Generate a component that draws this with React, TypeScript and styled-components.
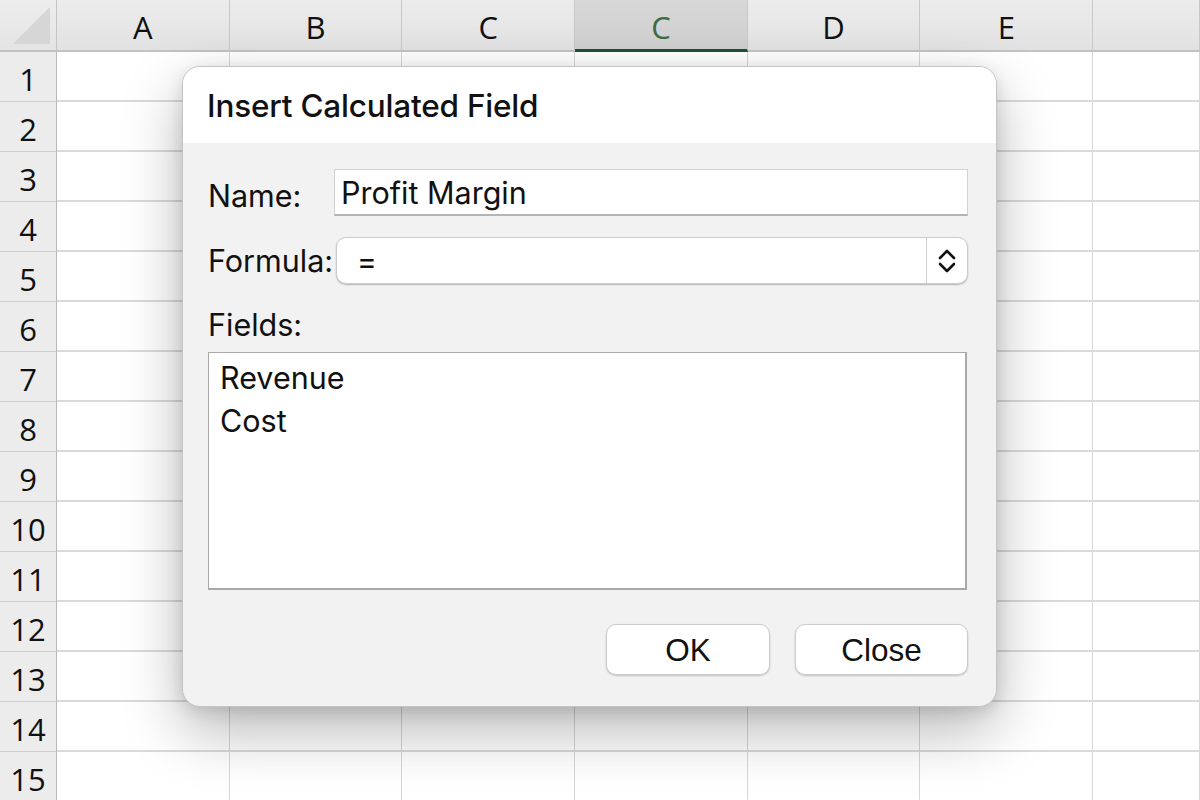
import React from 'react';
import styled, { createGlobalStyle, css } from 'styled-components';

const GlobalStyle = createGlobalStyle`
  html, body {
    margin: 0;
    padding: 0;
    background: #ffffff;
    overflow: hidden;
  }
`;

const COLUMNS = ['A', 'B', 'C', 'C', 'D', 'E', ''];
const ROWS = Array.from({ length: 15 }, (_, i) => i + 1);
const SELECTED_COL = 3;

const Page = styled.div`
  position: relative;
  width: 1200px;
  height: 800px;
  overflow: hidden;
  font-family: 'Open Sans', 'Noto Sans', sans-serif;
`;

const Sheet = styled.div`
  display: grid;
  grid-template-columns: 57px repeat(6, 172.7px) 1fr;
  grid-template-rows: 52px repeat(15, 50px);
  width: 100%;
  height: 100%;
`;

const Corner = styled.div`
  position: relative;
  background: linear-gradient(#ededed, #e4e4e4);
  border-right: 1px solid #c4c4c4;
  border-bottom: 2px solid #c2c2c2;

  // light grey triangle in the corner
  &::after {
    content: '';
    position: absolute;
    right: 6px;
    bottom: 6px;
    width: 0;
    height: 0;
    border-left: 37px solid transparent;
    border-bottom: 37px solid #d6d6d6;
  }
`;

const ColHeader = styled.div<{ $selected?: boolean }>`
  display: flex;
  align-items: center;
  justify-content: center;
  background: linear-gradient(#ececec, #e2e2e2);
  border-right: 1px solid #c8c8c8;
  border-bottom: 2px solid #c2c2c2;
  font-size: 31px;
  color: #111111;
  padding-top: 4px;

  ${({ $selected }) =>
    $selected &&
    css`
      background: linear-gradient(#d8d8d8, #cfcfcf);
      border-bottom: 3px solid #1f5134;
      color: #3d6b45;
      padding-top: 5px;
    `}
`;

const RowHeader = styled.div`
  display: flex;
  align-items: center;
  justify-content: center;
  background: #ececec;
  border-right: 1px solid #b8b8b8;
  border-bottom: 1px solid #cfcfcf;
  font-size: 31px;
  color: #111111;
  padding-top: 4px;
`;

const Cell = styled.div`
  background: #ffffff;
  border-right: 1px solid #d6d6d6;
  border-bottom: 2px solid #dadada;
`;

const Dialog = styled.div`
  position: absolute;
  left: 182px;
  top: 66px;
  width: 815px;
  height: 641px;
  box-sizing: border-box;
  display: flex;
  flex-direction: column;
  border-radius: 18px;
  border: 1px solid #c4c4c4;
  background: #f2f2f2;
  overflow: hidden;
  box-shadow: 0 24px 60px rgba(0, 0, 0, 0.28), 0 4px 16px rgba(0, 0, 0, 0.12);
  font-family: Inter, 'Liberation Sans', sans-serif;
  color: #111111;
`;

const TitleBar = styled.div`
  height: 76px;
  display: flex;
  align-items: center;
  padding: 0 0 0 24px;
  background: #ffffff;
  font-size: 31.5px;
  font-weight: 500;
  letter-spacing: -0.2px;
`;

const Body = styled.div`
  flex: 1;
  display: flex;
  flex-direction: column;
  padding: 26px 28px 31px 25px;
`;

const FieldRow = styled.div<{ $gap?: number }>`
  display: flex;
  align-items: center;
  margin-bottom: ${({ $gap }) => $gap ?? 21}px;
`;

const Label = styled.div<{ $width?: number }>`
  font-size: 30.5px;
  ${({ $width }) => $width && `width: ${$width}px; flex-shrink: 0;`}
`;

const TextInput = styled.div`
  flex: 1;
  height: 47px;
  box-sizing: border-box;
  display: flex;
  align-items: center;
  padding: 0 6px;
  background: #ffffff;
  border: 1px solid #d2d2d2;
  border-bottom: 2px solid #b4b4b4;
  font-size: 30.5px;
  margin-bottom: 5px;
`;

const Select = styled.div`
  flex: 1;
  height: 47px;
  box-sizing: border-box;
  display: flex;
  margin-left: 3px;
  background: #ffffff;
  border: 1px solid #cbcbcb;
  border-radius: 10px;
  box-shadow: 0 1px 1.5px rgba(0, 0, 0, 0.25);
`;

const SelectValue = styled.div`
  flex: 1;
  display: flex;
  align-items: center;
  padding-left: 20px;
  font-size: 30px;
`;

const Stepper = styled.div`
  width: 40px;
  display: flex;
  align-items: center;
  justify-content: center;
  border-left: 1px solid #d4d4d4;
`;

const SectionLabel = styled(Label)`
  margin: 2px 0 9px;
`;

const ListBox = styled.div`
  height: 238px;
  box-sizing: border-box;
  padding: 3px 11px;
  margin-right: 1px;
  background: #ffffff;
  border: 1px solid #a9a9a9;
  border-right-width: 2px;
  border-bottom-width: 2px;
`;

const ListItem = styled.div`
  font-size: 30.5px;
  line-height: 43px;
`;

const Buttons = styled.div`
  margin-top: auto;
  display: flex;
  justify-content: flex-end;
  gap: 25px;
`;

const Button = styled.button<{ $width: number }>`
  width: ${({ $width }) => $width}px;
  height: 51px;
  background: #ffffff;
  border: 1px solid #cdcdcd;
  border-radius: 10px;
  box-shadow: 0 1px 2px rgba(0, 0, 0, 0.2);
  font-family: 'Liberation Sans', Arial, sans-serif;
  font-size: 31.5px;
  color: #111111;
  padding: 2px 0 0;
  cursor: pointer;
`;

function ChevronUpDown() {
  return (
    <svg width="22" height="30" viewBox="0 0 22 30" fill="none" stroke="#111" strokeWidth="2.6" strokeLinecap="round" strokeLinejoin="round">
      <path d="M4 12 L11 5 L18 12" />
      <path d="M4 18 L11 25 L18 18" />
    </svg>
  );
}

export default function App() {
  return (
    <Page>
      <GlobalStyle />
      <Sheet>
        <Corner />
        {COLUMNS.map((c, i) => (
          <ColHeader key={`h${i}`} $selected={i === SELECTED_COL}>
            {c}
          </ColHeader>
        ))}
        {ROWS.map((r) => (
          <React.Fragment key={r}>
            <RowHeader>{r}</RowHeader>
            {COLUMNS.map((_, i) => (
              <Cell key={i} />
            ))}
          </React.Fragment>
        ))}
      </Sheet>

      <Dialog>
        <TitleBar>Insert Calculated Field</TitleBar>
        <Body>
          <FieldRow $gap={16}>
            <Label $width={126}>Name:</Label>
            <TextInput>Profit Margin</TextInput>
          </FieldRow>
          <FieldRow $gap={20}>
            <Label>Formula:</Label>
            <Select>
              <SelectValue>=</SelectValue>
              <Stepper>
                <ChevronUpDown />
              </Stepper>
            </Select>
          </FieldRow>
          <SectionLabel>Fields:</SectionLabel>
          <ListBox>
            <ListItem>Revenue</ListItem>
            <ListItem>Cost</ListItem>
          </ListBox>
          <Buttons>
            <Button $width={164}>OK</Button>
            <Button $width={173}>Close</Button>
          </Buttons>
        </Body>
      </Dialog>
    </Page>
  );
}
